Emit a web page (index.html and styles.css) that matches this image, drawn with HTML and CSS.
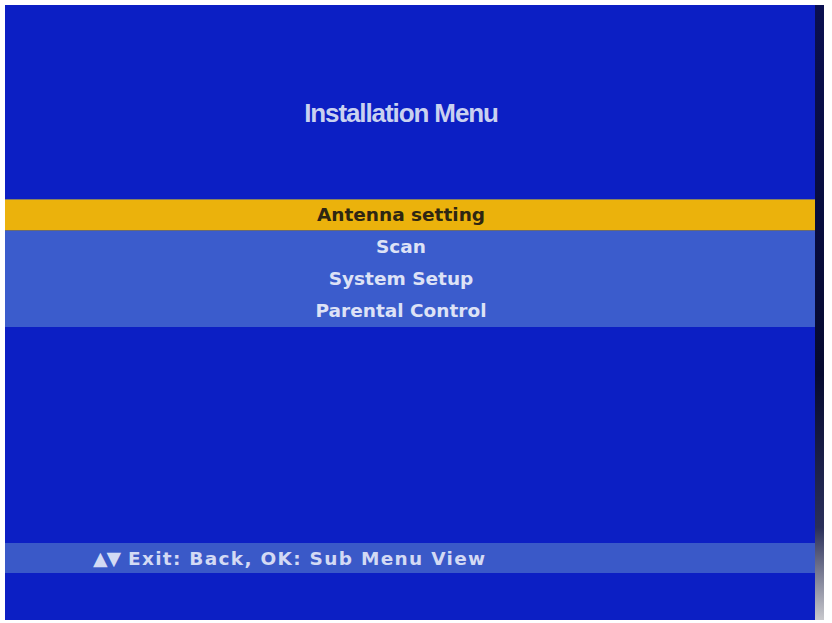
FILE: index.html
```html
<!DOCTYPE html>
<html>
<head>
<meta charset="utf-8">
<link rel="stylesheet" href="styles.css">
</head>
<body>
<div class="frame">
  <div class="screen">
    <div class="title">Installation Menu</div>
    <ul class="menu">
      <li class="item active">Antenna setting</li>
      <li class="item">Scan</li>
      <li class="item">System Setup</li>
      <li class="item">Parental Control</li>
    </ul>
    <div class="spacer"></div>
    <div class="help"><span class="arrows">▲▼</span> Exit: Back, OK: Sub Menu View</div>
    <div class="bottom"></div>
  </div>
  <div class="edge"></div>
</div>
</body>
</html>
```
FILE: styles.css
```css
html, body {
  margin: 0;
  padding: 0;
  background: #ffffff;
}
.frame {
  display: flex;
  padding: 5px 0 0 5px;
  width: 832px;
  height: 623px;
  box-sizing: border-box;
}
.screen {
  width: 810px;
  height: 615px;
  background: #0c1fc4;
  display: flex;
  flex-direction: column;
  font-family: "DejaVu Sans", "Liberation Sans", sans-serif;
}
.edge {
  width: 9px;
  height: 615px;
  background: linear-gradient(to bottom, #0a0f50 0%, #060a30 60%, #2a2f5a 85%, #c8c8cc 100%);
}
.title {
  margin-top: 92px;
  height: 32px;
  line-height: 32px;
  text-align: center;
  padding-right: 18px;
  font-family: "Liberation Sans", sans-serif;
  font-weight: bold;
  font-size: 26px;
  color: #c9d1f0;
  letter-spacing: -1.1px;
}
.menu {
  list-style: none;
  margin: 70px 0 0 0;
  padding: 0;
  background: #3b5ccc;
}
.item {
  height: 32px;
  line-height: 32px;
  text-align: center;
  padding-right: 18px;
  font-weight: bold;
  font-size: 18.5px;
  color: #dde2f6;
}
.item.active {
  background: #ebb20c;
  color: #2e2612;
  height: 30px;
  line-height: 30px;
  border-top: 1px solid #8a8060;
  border-bottom: 1px solid #6a6a70;
}
.spacer {
  flex: 1;
}
.help {
  height: 30px;
  line-height: 30px;
  background: #3a59c8;
  padding-left: 88px;
  font-weight: bold;
  font-size: 18.5px;
  letter-spacing: 1.3px;
  color: #d3daf4;
}
.arrows {
  font-size: 19px;
  letter-spacing: -1px;
}
.bottom {
  height: 47px;
}
```
